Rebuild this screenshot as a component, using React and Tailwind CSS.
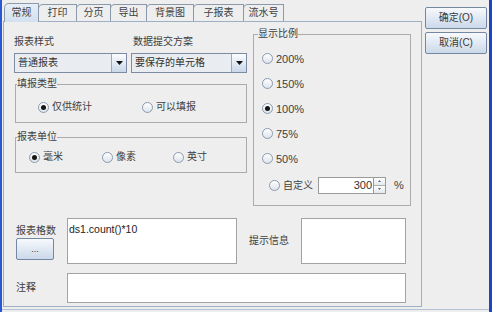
import React from 'react';

function Radio({ checked }) {
  return (
    <span className="flex h-[11px] w-[11px] shrink-0 items-center justify-center rounded-full border border-[#8c9aae] bg-linear-to-b from-white to-[#dde4ec]">
      {checked && <span className="h-[5px] w-[5px] rounded-full bg-[#161616]" />}
    </span>
  );
}

function RadioItem({ checked, label, className = '' }) {
  return (
    <div className={`flex items-center gap-[3px] ${className}`}>
      <Radio checked={checked} />
      <span>{label}</span>
    </div>
  );
}

function Combo({ value, width }) {
  return (
    <div className={`flex h-[20px] border border-[#7d8ca2] ${width}`}>
      <div className="flex flex-1 items-center bg-[#e9edf2] pl-[3px] text-[#333]">{value}</div>
      <div className="flex w-[15px] items-center justify-center border-l border-[#9aaabd] bg-linear-to-b from-[#fbfcfe] to-[#c9d7e8]">
        <svg width="7" height="4" viewBox="0 0 7 4">
          <path d="M0 0h7L3.5 4z" fill="#111" />
        </svg>
      </div>
    </div>
  );
}

function Button({ children, className = '' }) {
  return (
    <div
      className={`flex items-center justify-center rounded-[2px] border border-[#7487a3] bg-linear-to-b from-[#f7f9fc] to-[#cbd9ea] text-[#3a3a3a] ${className}`}
    >
      {children}
    </div>
  );
}

const tabs = [
  { label: '常规', w: 'w-[35px]', active: true },
  { label: '打印', w: 'w-[39px]' },
  { label: '分页', w: 'w-[35px]' },
  { label: '导出', w: 'w-[37px]' },
  { label: '背景图', w: 'w-[48px]' },
  { label: '子报表', w: 'w-[51px]' },
  { label: '流水号', w: 'w-[41px]' },
];

export default function App() {
  return (
    <div className="flex h-[312px] w-[492px] flex-col overflow-hidden border-l-2 border-r-[3px] border-l-[#2858d6] border-r-[#1d44c6] bg-[#eeeeee] font-['Liberation_Sans','Noto_Sans_CJK_SC',sans-serif] text-[10px] leading-[12px] text-[#404040]">
      <div className="flex h-[309px]">
        {/* left: tabs + panel */}
        <div className="ml-[1px] flex w-[419px] flex-col pt-[4px]">
          <div className="flex h-[17px] items-end pl-[1px]">
            {tabs.map((t, i) => (
              <div
                key={t.label}
                className={`flex items-center justify-center rounded-tl-[5px] border border-b-0 border-[#8b99ad] ${t.w} ${
                  i > 0 ? '-ml-px' : ''
                } ${
                  t.active
                    ? 'relative z-10 -mb-px h-[19px] bg-linear-to-b from-[#e6eef8] to-[#d3e0f0]'
                    : 'h-[17px] bg-[#eeeeee]'
                }`}
              >
                {t.label}
              </div>
            ))}
          </div>

          <div className="h-[286px] border border-[#9eafc5]">
            <div className="flex">
              <div className="w-[243px] pl-[10px]">
                <div className="mt-[14px] flex">
                  <span className="w-[119px]">报表样式</span>
                  <span>数据提交方案</span>
                </div>
                <div className="mt-[5px] flex">
                  <Combo value="普通报表" width="w-[113px]" />
                  <div className="ml-[4px]">
                    <Combo value="要保存的单元格" width="w-[116px]" />
                  </div>
                </div>

                <fieldset className="ml-[1px] mt-[5px] h-[45px] w-[232px] border border-[#ababab] pl-[1px]">
                  <legend>填报类型</legend>
                  <div className="mt-[11px] flex">
                    <RadioItem checked label="仅供统计" className="ml-[21px] w-[104px]" />
                    <RadioItem label="可以填报" />
                  </div>
                </fieldset>

                <fieldset className="ml-[1px] mt-[8px] h-[42px] w-[232px] border border-[#ababab] pl-[1px]">
                  <legend>报表单位</legend>
                  <div className="mt-[8px] flex">
                    <RadioItem checked label="毫米" className="ml-[12px] w-[73px]" />
                    <RadioItem label="像素" className="w-[71px]" />
                    <RadioItem label="英寸" />
                  </div>
                </fieldset>
              </div>

              <fieldset className="ml-[6px] mt-[6px] h-[178px] w-[158px] border border-[#ababab] pl-[4px]">
                <legend>显示比例</legend>
                <div className="mt-[6px] flex flex-col text-[11px]">
                  {['200%', '150%', '100%', '75%', '50%'].map((p) => (
                    <div key={p} className="flex h-[25px] items-center">
                      <RadioItem checked={p === '100%'} label={p} className="ml-[4px]" />
                    </div>
                  ))}
                  <div className="flex h-[28px] items-center">
                    <RadioItem label={<span className="text-[10px]">自定义</span>} className="ml-[11px]" />
                    <div className="ml-[5px] flex h-[17px] w-[56px] items-center justify-end border border-[#9a9a9a] bg-white pr-[1px] text-[#333]">
                      300
                    </div>
                    <div className="flex h-[17px] w-[12px] flex-col border border-l-0 border-[#9a9a9a]">
                      <div className="flex flex-1 items-center justify-center border-b border-[#b0b0b0] bg-linear-to-b from-white to-[#e2e8ef]">
                        <svg width="3" height="2" viewBox="0 0 3 2">
                          <path d="M0 2h3L1.5 0z" fill="#666" />
                        </svg>
                      </div>
                      <div className="flex flex-1 items-center justify-center bg-linear-to-b from-white to-[#e2e8ef]">
                        <svg width="3" height="2" viewBox="0 0 3 2">
                          <path d="M0 0h3L1.5 2z" fill="#666" />
                        </svg>
                      </div>
                    </div>
                    <span className="ml-[8px]">%</span>
                  </div>
                </div>
              </fieldset>
            </div>

            <div className="mt-[12px] flex h-[46px] pl-[12px]">
              <div className="flex w-[51px] flex-col pt-[7px]">
                <span>报表格数</span>
                <Button className="mt-[1px] h-[22px] w-[38px] text-[9px]">...</Button>
              </div>
              <div className="h-[46px] w-[170px] border border-[#a3a3a3] bg-white pl-[1px] pt-[4px] text-[10.5px] text-[#222]">
                ds1.count()*10
              </div>
              <span className="ml-[12px] self-center">提示信息</span>
              <div className="ml-[12px] h-[46px] w-[105px] border border-[#a3a3a3] bg-white" />
            </div>

            <div className="mt-[9px] flex h-[30px] items-center pl-[12px]">
              <span className="w-[51px]">注释</span>
              <div className="h-[30px] w-[339px] border border-[#a3a3a3] bg-white" />
            </div>
          </div>
        </div>

        {/* right: buttons */}
        <div className="ml-[3px] flex w-[62px] flex-col">
          <Button className="mt-[7px] h-[22px]">确定(O)</Button>
          <Button className="mt-[3px] h-[22px]">取消(C)</Button>
        </div>
      </div>
      <div className="h-px bg-[#b4c1d3]" />
    </div>
  );
}
